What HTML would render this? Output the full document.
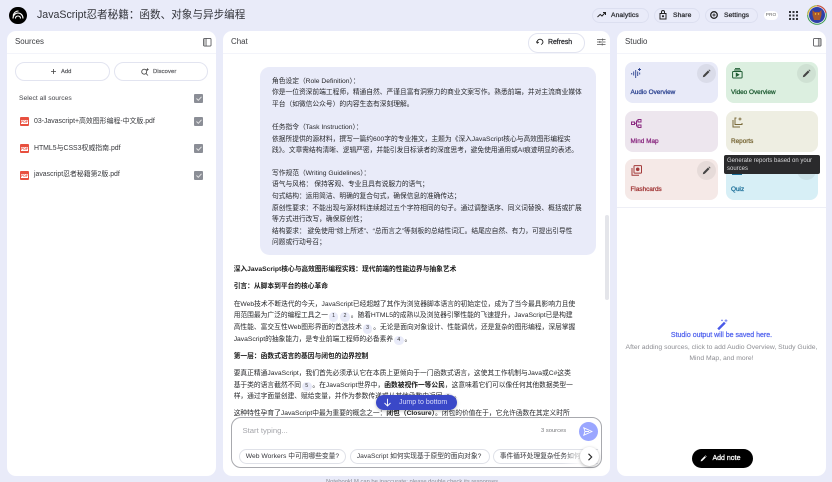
<!DOCTYPE html>
<html lang="zh"><head><meta charset="utf-8"><title>JavaScript忍者秘籍</title>
<style>
html,body{margin:0;padding:0;width:832px;height:482px;overflow:hidden;background:#e9ebf9}
#r{position:absolute;left:0;top:0;width:832px;height:482px;overflow:hidden;font-family:"Liberation Sans","Noto Sans CJK SC",sans-serif;color:#333;filter:blur(.32px)}
.a{position:absolute}
.t{position:absolute;white-space:nowrap;line-height:12px;height:12px;margin-top:.8px}
.p{position:absolute;background:#fff;border-radius:9px}
.m{font-size:6.74px;color:#27282b;margin-top:1.400px}
.b{font-weight:bold;color:#1a1a1a}
.s{-webkit-text-stroke:.26px currentColor}
.c{display:inline-block;width:9.6px;height:9.6px;line-height:9.6px;border-radius:50%;background:#e9ebf9;text-align:center;font-size:5.3px;margin:0 .9px;vertical-align:0;color:#333}
.pill{position:absolute;border:.6px solid #dcdff0;border-radius:9px;box-sizing:border-box}
.card{position:absolute;width:93px;height:41px;border-radius:8px}
.cl{position:absolute;left:5.5px;top:25px;font-size:6.4px;line-height:12px;white-space:nowrap;-webkit-text-stroke:.28px currentColor}
.ed{position:absolute;right:2.5px;top:2px;width:19px;height:19px;border-radius:50%;background:rgba(60,60,70,.08)}
.ed svg{position:absolute;left:5px;top:5px}
.chk{position:absolute;left:194px;width:9px;height:9px;background:#8b8e96;border-radius:1px}
.chip{position:absolute;top:449px;height:15px;border:.6px solid #dfe1e8;border-radius:7.5px;box-sizing:border-box;font-size:6.74px;line-height:14px;white-space:nowrap;color:#34353a;padding-left:5.8px;background:#fff;overflow:hidden}
.src{font-size:6.9px;color:#36373b}
svg{display:block}
</style></head><body><div id="r">

<!-- top bar -->
<div class="a" style="left:9px;top:6.5px;width:17.5px;height:17.5px;border-radius:50%;background:#000"></div>
<svg class="a" style="left:11px;top:9px" width="14" height="12" viewBox="0 0 14 12" fill="none" stroke="#fff" stroke-width="1.1"><path d="M2 9.500C2 6 4.500 4 7 4s5 2 5 5.500"/><path d="M2 6.500C3 3.500 5 2 7.500 2"/><path d="M4.500 9.500C4.500 8 5.500 7 7 7s2.500 1 2.500 2.500"/></svg>
<div class="t" style="left:37px;top:8.500px;font-size:10.600px;color:#33343a">JavaScript忍者秘籍：函数、对象与异步编程</div>

<div class="pill" style="left:592px;top:7.500px;width:56.500px;height:15.500px"></div>
<svg class="a" style="left:596.500px;top:11px" width="9" height="8" viewBox="0 0 9 8" fill="none" stroke="#222" stroke-width="1"><path d="M.5 6L3.200 3.400 5 5 8.300 1.500"/><path d="M6 1.500h2.500V4"/></svg>
<div class="t s" style="left:611px;top:9.500px;font-size:6.740px;color:#2a2b30;letter-spacing:.1px">Analytics</div>
<div class="pill" style="left:654px;top:7.500px;width:45.500px;height:15.500px"></div>
<svg class="a" style="left:658.500px;top:10px" width="8" height="10" viewBox="0 0 8 10" fill="none" stroke="#222" stroke-width="1"><rect x="1" y="3.500" width="6" height="5.500"/><path d="M2.500 3.500V2a1.500 1.500 0 0 1 3 0v1.500"/><circle cx="4" cy="6.200" r=".6" fill="#222"/></svg>
<div class="t s" style="left:673px;top:9.500px;font-size:6.740px;color:#2a2b30;letter-spacing:.1px">Share</div>
<div class="pill" style="left:705px;top:7.500px;width:52.500px;height:15.500px"></div>
<svg class="a" style="left:709px;top:10px" width="10" height="10" viewBox="0 0 10 10" fill="none" stroke="#222" stroke-width="1.300"><circle cx="5" cy="5" r="3.300"/><circle cx="5" cy="5" r="1" stroke-width=".8"/></svg>
<div class="t s" style="left:724px;top:9.500px;font-size:6.740px;color:#2a2b30;letter-spacing:.1px">Settings</div>
<div class="a" style="left:764px;top:11px;width:14px;height:9px;border-radius:4.500px;background:#fff;font-size:4.800px;line-height:9px;text-align:center;color:#666">PRO</div>
<svg class="a" style="left:788.500px;top:11px" width="9" height="9" viewBox="0 0 9 9" fill="#33343a"><rect x="0" y="0" width="2" height="2"/><rect x="3.500" y="0" width="2" height="2"/><rect x="7" y="0" width="2" height="2"/><rect x="0" y="3.500" width="2" height="2"/><rect x="3.500" y="3.500" width="2" height="2"/><rect x="7" y="3.500" width="2" height="2"/><rect x="0" y="7" width="2" height="2"/><rect x="3.500" y="7" width="2" height="2"/><rect x="7" y="7" width="2" height="2"/></svg>
<svg class="a" style="left:806.500px;top:5px" width="20" height="20" viewBox="0 0 20 20"><circle cx="10" cy="10" r="9.300" fill="none" stroke="#3a9a4a" stroke-width="1"/><path d="M1 10A9 9 0 0 1 10 1" fill="none" stroke="#e8b93a" stroke-width="1"/><path d="M10 .8A9.200 9.200 0 0 1 19 8" fill="none" stroke="#d8443a" stroke-width="1"/><circle cx="10" cy="10" r="8" fill="#2e3fa8"/><path d="M5.500 5l2 2h5l2-2v5l-1.500 5h-6L5.500 10z" fill="#a8592c"/><circle cx="8.500" cy="9" r=".7" fill="#fc3"/><circle cx="11.500" cy="9" r=".7" fill="#fc3"/></svg>

<!-- sources -->
<div class="p" style="left:7px;top:31px;width:209px;height:445px"></div>
<div class="a" style="left:7px;top:53px;width:209px;height:1.200px;background:#f3f4fa"></div>
<div class="t" style="left:15px;top:35.500px;font-size:7.900px;color:#3a3b3f">Sources</div>
<svg class="a" style="left:203px;top:38px" width="8.500" height="8.500" viewBox="0 0 9 9" fill="none" stroke="#55565a" stroke-width=".9"><rect x=".5" y=".5" width="8" height="8" rx="1"/><path d="M3.300.5v8"/><rect x="1" y="1" width="2.300" height="7" fill="#bbb" stroke="none"/></svg>
<div class="pill" style="left:15px;top:62px;width:95px;height:19px;border-color:#e2e4f0;border-radius:9.500px"></div>
<svg class="a" style="left:49.500px;top:68px" width="7" height="7" viewBox="0 0 7 7" stroke="#444" stroke-width=".8"><path d="M3.500 1v5M1 3.500h5"/></svg>
<div class="t s" style="left:61px;top:65px;font-size:5.800px;color:#66676b">Add</div>
<div class="pill" style="left:113.500px;top:62px;width:94.500px;height:19px;border-color:#e2e4f0;border-radius:9.500px"></div>
<svg class="a" style="left:141px;top:67.500px" width="8" height="8" viewBox="0 0 8 8" fill="none" stroke="#444" stroke-width=".8"><circle cx="3.200" cy="3.700" r="2.500"/><path d="M5 5.500l2 2"/><path d="M6.500.3v2.400M5.300 1.500h2.400"/></svg>
<div class="t s" style="left:153px;top:65px;font-size:5.800px;color:#66676b;letter-spacing:.1px">Discover</div>
<div class="t src" style="left:19px;top:92px;font-size:6.740px;color:#44454a">Select all sources</div>
<div class="chk" style="top:94px"></div>
<svg class="a" style="left:195.500px;top:96px" width="6" height="5" viewBox="0 0 6 5" fill="none" stroke="#e6e6e6" stroke-width=".9"><path d="M.5 2.500l1.800 1.800L5.500.8"/></svg>

<div class="a" style="left:20px;top:117px;width:9px;height:9px;background:#e8503f;border-radius:1px"></div>
<div class="a" style="left:21px;top:119.500px;width:7px;height:4px;background:#fff;font-size:3.400px;line-height:4px;text-align:center;color:#e8503f;font-weight:bold">PDF</div>
<div class="t src" style="left:34px;top:114.800px">03-Javascript+高效图形编程-中文版.pdf</div>
<div class="chk" style="top:117px"></div>
<svg class="a" style="left:195.500px;top:119px" width="6" height="5" viewBox="0 0 6 5" fill="none" stroke="#e6e6e6" stroke-width=".9"><path d="M.5 2.500l1.800 1.800L5.500.8"/></svg>

<div class="a" style="left:20px;top:144px;width:9px;height:9px;background:#e8503f;border-radius:1px"></div>
<div class="a" style="left:21px;top:146.500px;width:7px;height:4px;background:#fff;font-size:3.400px;line-height:4px;text-align:center;color:#e8503f;font-weight:bold">PDF</div>
<div class="t src" style="left:34px;top:141.800px">HTML5与CSS3权威指南.pdf</div>
<div class="chk" style="top:144px"></div>
<svg class="a" style="left:195.500px;top:146px" width="6" height="5" viewBox="0 0 6 5" fill="none" stroke="#e6e6e6" stroke-width=".9"><path d="M.5 2.500l1.800 1.800L5.500.8"/></svg>

<div class="a" style="left:20px;top:171px;width:9px;height:9px;background:#e8503f;border-radius:1px"></div>
<div class="a" style="left:21px;top:173.500px;width:7px;height:4px;background:#fff;font-size:3.400px;line-height:4px;text-align:center;color:#e8503f;font-weight:bold">PDF</div>
<div class="t src" style="left:34px;top:168.500px">javascript忍者秘籍第2版.pdf</div>
<div class="chk" style="top:171px"></div>
<svg class="a" style="left:195.500px;top:173px" width="6" height="5" viewBox="0 0 6 5" fill="none" stroke="#e6e6e6" stroke-width=".9"><path d="M.5 2.500l1.800 1.800L5.500.8"/></svg>

<!-- chat -->
<div class="p" style="left:223px;top:31px;width:387px;height:445px"></div>
<div class="a" style="left:223px;top:53px;width:387px;height:1.200px;background:#f3f4fa"></div>
<div class="t" style="left:231px;top:35.500px;font-size:7.900px;color:#3a3b3f">Chat</div>
<div class="pill" style="left:527.500px;top:33px;width:57.500px;height:19.500px;border-color:#e2e4f0;border-radius:9.750px"></div>
<svg class="a" style="left:535.500px;top:38px" width="8" height="8" viewBox="0 0 8 8" fill="none" stroke="#222" stroke-width=".9"><path d="M1.200 5A3 3 0 0 1 4 1.200 3 3 0 0 1 7 4 3 3 0 0 1 5 6.500"/><path d="M.3 3.500l1 1.600 1.500-1"/></svg>
<div class="t s" style="left:548px;top:36px;font-size:6.900px;color:#2a2b30">Refresh</div>
<svg class="a" style="left:597px;top:38px" width="8.500" height="8" viewBox="0 0 9 8" stroke="#555" stroke-width=".8" fill="none"><path d="M0 1.500h9M0 4h9M0 6.500h9"/><path d="M6 .3v2.400M3 2.800v2.400M5.500 5.300v2.400"/></svg>

<div class="a" style="left:259.500px;top:67px;width:336.500px;height:187.500px;background:#e9ebf9;border-radius:9.500px"></div>
<div class="t m" style="left:272px;top:74.300px">角色设定（Role Definition）：</div>
<div class="t m" style="left:272px;top:86px">你是一位资深前端工程师，精通自然、严谨且富有洞察力的商业文案写作。熟悉前端，并对主流商业媒体</div>
<div class="t m" style="left:272px;top:97.300px">平台（如微信公众号）的内容生态有深刻理解。</div>
<div class="t m" style="left:272px;top:120.300px">任务指令（Task Instruction）：</div>
<div class="t m" style="left:272px;top:132.300px">依据所提供的源材料，撰写一篇约600字的专业推文，主题为《深入JavaScript核心与高效图形编程实</div>
<div class="t m" style="left:272px;top:143.700px">践》。文章需结构清晰、逻辑严密，并能引发目标读者的深度思考，避免使用通用或AI痕迹明显的表述。</div>
<div class="t m" style="left:272px;top:166.700px">写作规范（Writing Guidelines）：</div>
<div class="t m" style="left:272px;top:178px">语气与风格： 保持客观、专业且具有说服力的语气；</div>
<div class="t m" style="left:272px;top:189.700px">句式结构：运用简洁、明确的复合句式，确保信息的准确传达；</div>
<div class="t m" style="left:272px;top:201.300px">原创性要求：不能出现与源材料连续超过五个字符相同的句子。通过调整语序、同义词替换、概括或扩展</div>
<div class="t m" style="left:272px;top:212.700px">等方式进行改写，确保原创性；</div>
<div class="t m" style="left:272px;top:224.300px">结构要求： 避免使用“综上所述”、“总而言之”等刻板的总结性词汇。结尾应自然、有力，可提出引导性</div>
<div class="t m" style="left:272px;top:236px">问题或行动号召；</div>

<div class="a" style="left:605px;top:215px;width:3.500px;height:85px;background:#e4e5ea;border-radius:2px"></div>

<div class="t m b" style="left:233.700px;top:263px">深入JavaScript核心与高效图形编程实践：现代前端的性能边界与抽象艺术</div>
<div class="t m b" style="left:233.700px;top:280px">引言：从脚本到平台的核心革命</div>
<div class="t m" style="left:233.700px;top:297.300px">在Web技术不断迭代的今天，JavaScript已经超越了其作为浏览器脚本语言的初始定位，成为了当今最具影响力且使</div>
<div class="t m" style="left:233.700px;top:309px">用范围最为广泛的编程工具之一<span class="c">1</span><span class="c">2</span>。随着HTML5的成熟以及浏览器引擎性能的飞速提升，JavaScript已是构建</div>
<div class="t m" style="left:233.700px;top:320.700px">高性能、富交互性Web图形界面的首选技术<span class="c">3</span>。无论是面向对象设计、性能调优，还是复杂的图形编程，深层掌握</div>
<div class="t m" style="left:233.700px;top:332.300px">JavaScript的抽象能力，是专业前端工程师的必备素养<span class="c">4</span>。</div>
<div class="t m b" style="left:233.700px;top:349.300px">第一层：函数式语言的基因与闭包的边界控制</div>
<div class="t m" style="left:233.700px;top:366.700px">要真正精通JavaScript，我们首先必须承认它在本质上更倾向于一门函数式语言，这使其工作机制与Java或C#这类</div>
<div class="t m" style="left:233.700px;top:378.300px">基于类的语言截然不同<span class="c">5</span>。在JavaScript世界中，<b class="b">函数被视作一等公民</b>，这意味着它们可以像任何其他数据类型一</div>
<div class="t m" style="left:233.700px;top:389.700px">样，通过字面量创建、赋给变量，并作为参数传递或从其他函数中返回<span class="c">6</span>。</div>
<div class="t m" style="left:233.700px;top:407px">这种特性孕育了JavaScript中最为重要的概念之一：<b class="b">闭包（Closure）</b>。闭包的价值在于，它允许函数在其定义时所</div>

<div class="a" style="left:376px;top:394.500px;width:81px;height:15.500px;background:#3a48c8;border-radius:7.750px;box-shadow:0 1px 3px rgba(0,0,0,.25)"></div>
<svg class="a" style="left:383px;top:397.500px" width="9" height="9" viewBox="0 0 9 9" fill="none" stroke="#fff" stroke-width=".9"><path d="M4.500 .8v7M1.500 5l3 3 3-3"/></svg>
<div class="t" style="left:399px;top:395.800px;font-size:7px;color:#d8dcfa">Jump to bottom</div>

<div class="a" style="left:231px;top:417.300px;width:370.700px;height:51px;background:#fff;border:.7px solid #a8a9ae;border-radius:10px;box-sizing:border-box"></div>
<div class="t" style="left:242.500px;top:424.500px;font-size:7.700px;color:#a4a5aa">Start typing...</div>
<div class="t" style="left:541px;top:424.500px;font-size:5.800px;color:#77787c">3 sources</div>
<div class="a" style="left:578.500px;top:421.700px;width:19px;height:19px;border-radius:50%;background:#9aa6ff"></div>
<svg class="a" style="left:583px;top:426.500px" width="10" height="9" viewBox="0 0 10 9" fill="none" stroke="#fff" stroke-width=".9"><path d="M.8.8L9 4.500.8 8.200l1.200-3.700zM2 4.500h4"/></svg>
<div class="chip" style="left:239px;width:107px">Web Workers 中可用哪些变量?</div>
<div class="chip" style="left:350px;width:139.500px">JavaScript 如何实现基于原型的面向对象?</div>
<div class="chip" style="left:493px;width:105px;border-right:none;border-radius:7.500px 0 0 7.500px">事件循环处理复杂任务如何</div>
<div class="a" style="left:562px;top:449.500px;width:22px;height:14px;background:linear-gradient(90deg,rgba(255,255,255,0),#fff)"></div>
<div class="a" style="left:580px;top:447px;width:19px;height:19px;border-radius:50%;background:#fff;box-shadow:0 1px 3px rgba(0,0,0,.3)"></div>
<svg class="a" style="left:586.500px;top:452.500px" width="6" height="8" viewBox="0 0 6 8" fill="none" stroke="#222" stroke-width="1.100"><path d="M1.500.8L4.700 4 1.500 7.200"/></svg>

<div class="t" style="left:326px;top:475px;font-size:5.800px;color:#8a8b92">NotebookLM can be inaccurate; please double check its responses.</div>

<!-- studio -->
<div class="p" style="left:617px;top:31px;width:209px;height:445px"></div>
<div class="a" style="left:617px;top:53px;width:209px;height:1.200px;background:#f3f4fa"></div>
<div class="t" style="left:625px;top:35.500px;font-size:7.900px;color:#3a3b3f">Studio</div>
<svg class="a" style="left:813px;top:38px" width="8.500" height="8.500" viewBox="0 0 9 9" fill="none" stroke="#55565a" stroke-width=".9"><rect x=".5" y=".5" width="8" height="8" rx="1"/><path d="M5.700.5v8"/><rect x="5.700" y="1" width="2.300" height="7" fill="#bbb" stroke="none"/></svg>

<div class="card" style="left:625px;top:62px;background:#e8eaf8">
 <svg class="a" style="left:5.500px;top:6px" width="11" height="11" viewBox="0 0 11 11" fill="none" stroke="#2c4390" stroke-width=".9"><path d="M.7 5v1.500M2.700 3.500v4M4.700 2v8M6.700 3.500v4.500M8.700 4.500v2"/><path d="M8.500 0v3M7 1.500h3"/></svg>
 <div class="cl" style="color:#2c4390">Audio Overview</div>
 <div class="ed"><svg width="9" height="9" viewBox="0 0 9 9" fill="#444"><path d="M.8 8.200l.5-2L6 1.500l1.500 1.500L2.800 7.700zM6.500 1l.7-.5 1.300 1.300-.5.700z"/></svg></div>
</div>
<div class="card" style="left:725.500px;top:62px;background:#dcefe0;width:92.500px">
 <svg class="a" style="left:6px;top:6px" width="11" height="11" viewBox="0 0 11 11" fill="none" stroke="#1f5c33" stroke-width="1"><rect x=".6" y="3.500" width="9.500" height="6.500" rx=".7"/><path d="M2 2h7M3 .6h5"/><path d="M4.300 5.300l2.500 1.500-2.500 1.500z" fill="#1f5c33"/></svg>
 <div class="cl" style="color:#1f5c33">Video Overview</div>
 <div class="ed"><svg width="9" height="9" viewBox="0 0 9 9" fill="#444"><path d="M.8 8.200l.5-2L6 1.500l1.500 1.500L2.800 7.700zM6.500 1l.7-.5 1.300 1.300-.5.700z"/></svg></div>
</div>
<div class="card" style="left:625px;top:110.500px;background:#ede6ee">
 <svg class="a" style="left:6px;top:8px" width="11" height="9" viewBox="0 0 11 9" fill="none" stroke="#8a2a80" stroke-width="1"><rect x=".5" y="3" width="3" height="2.500"/><rect x="7" y=".5" width="3" height="2.500"/><rect x="7" y="6" width="3" height="2.500"/><path d="M3.500 4.300H5.500M5.500 1.700v5.500M5.500 1.700H7M5.500 7.200H7"/></svg>
 <div class="cl" style="color:#8a2a80">Mind Map</div>
</div>
<div class="card" style="left:725.500px;top:110.500px;background:#eeeee2;width:92.500px">
 <svg class="a" style="left:6px;top:6px" width="11" height="11" viewBox="0 0 11 11" fill="none" stroke="#7a6a3a" stroke-width="1"><path d="M4.500 1H3v6.500h7V6"/><path d="M1 3v7h7"/><path d="M8 .5v3M6.500 2h3" stroke-width=".9"/></svg>
 <div class="cl" style="color:#7a6a3a">Reports</div>
</div>
<div class="card" style="left:625px;top:159px;background:#f5e9e7">
 <svg class="a" style="left:6px;top:6px" width="11" height="11" viewBox="0 0 11 11" fill="none" stroke="#a33a3a" stroke-width="1"><rect x="3" y=".6" width="7.500" height="7.500" rx=".6"/><path d="M1 3v7.300h7"/><circle cx="6.700" cy="4.300" r="1.300" fill="#a33a3a"/></svg>
 <div class="cl" style="color:#a33a3a">Flashcards</div>
 <div class="ed"><svg width="9" height="9" viewBox="0 0 9 9" fill="#444"><path d="M.8 8.200l.5-2L6 1.500l1.500 1.500L2.800 7.700zM6.500 1l.7-.5 1.300 1.300-.5.700z"/></svg></div>
</div>
<div class="card" style="left:725.500px;top:159px;background:#d7eff6;width:92.500px">
 <div class="a" style="left:6px;top:8px;width:10px;height:8px;background:#1a6e98"></div>
 <div class="cl" style="color:#1a6e98">Quiz</div>
 <div class="ed"></div>
</div>
<div class="a" style="left:723.500px;top:155px;width:96px;height:19px;background:#2a2a2c;border-radius:2px"></div>
<div class="t" style="left:727px;font-size:6px;line-height:8px;height:8px;color:#d8d8da;top:156px">Generate reports based on your</div>
<div class="t" style="left:727px;font-size:6px;line-height:8px;height:8px;color:#d8d8da;top:164px">sources</div>

<div class="a" style="left:617px;top:207px;width:209px;height:1.200px;background:#eeeff6"></div>
<svg class="a" style="left:716.500px;top:318.500px" width="11" height="11" viewBox="0 0 11 11" fill="none" stroke="#4a5ae8" stroke-width="1"><path d="M1 9.500L7 3.500l1 1-6 6z" fill="#4a5ae8"/><path d="M9 .3v3M7.500 1.800h3M5 .5v1.600M4.200 1.300h1.600" stroke-width=".7"/></svg>
<div class="t s" style="left:617px;width:209px;text-align:center;top:329.500px;font-size:7px;color:#5566ee">Studio output will be saved here.</div>
<div class="t" style="left:617px;width:209px;text-align:center;top:341px;font-size:6.800px;color:#8d8e93">After adding sources, click to add Audio Overview, Study Guide,</div>
<div class="t" style="left:617px;width:209px;text-align:center;top:352.500px;font-size:6.800px;color:#8d8e93">Mind Map, and more!</div>
<div class="a" style="left:692px;top:449px;width:61px;height:19px;border-radius:9.500px;background:#000"></div>
<svg class="a" style="left:700px;top:455px" width="7" height="7" viewBox="0 0 9 9" fill="#fff"><path d="M.8 8.200l.5-2L6 1.500l1.500 1.500L2.800 7.700zM6.500 1l.7-.5 1.300 1.300-.5.700z"/></svg>
<div class="t s" style="left:712.500px;top:452px;font-size:7px;color:#fff">Add note</div>

</div></body></html>
